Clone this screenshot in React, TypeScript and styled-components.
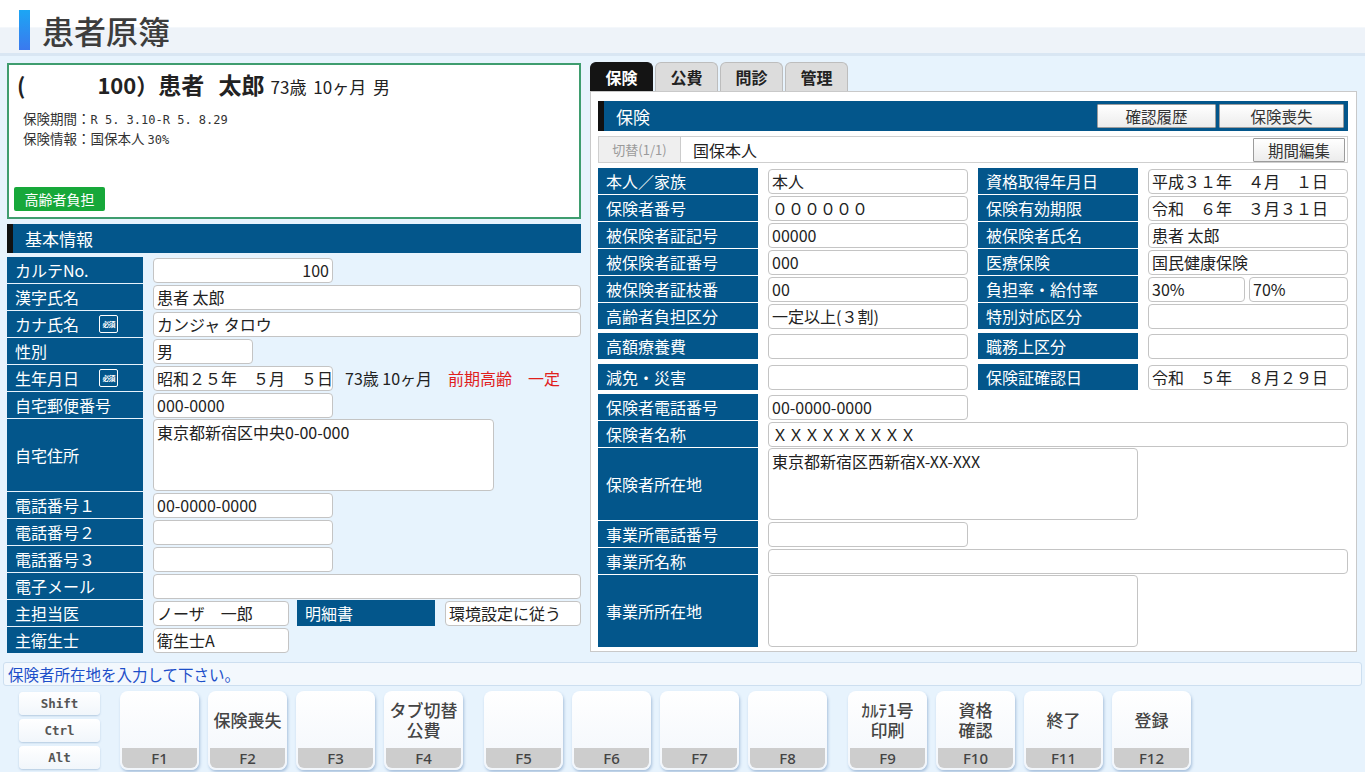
import styled, { createGlobalStyle } from "styled-components";

const GlobalStyle = createGlobalStyle`
    html, body {
        margin: 0;
        padding: 0;
    }

    body {
        background: #e7f3fd;
        font-family: "Noto Sans CJK JP", "Noto Sans", sans-serif;
        color: #222;
    }

    * {
        box-sizing: border-box;
    }
`

const Page = styled.div`
    width: 1365px;
    height: 772px;
    overflow: hidden;
`

const Header = styled.header`
    display: flex;
    align-items: center;

    height: 56px;
    padding: 7px 0 0 19px;

    background: linear-gradient(to bottom, #ffffff 0, #ffffff 50%, #eef3f9 53%, #eef3f9 100%);
    border-bottom: 3px solid #d9e6f3;
`

const TitleMark = styled.div`
    width: 11px;
    height: 40px;
    background: linear-gradient(to bottom, #1ca6f4, #3b79ee);
`

const Title = styled.h1`
    margin: 0 0 0 12px;
    font-size: 32px;
    font-weight: 500;
    line-height: 1;
    color: #3d3d3d;
`

const Main = styled.main`
    display: flex;
    gap: 9px;

    height: 597px;
    padding: 6px 0 0 7px;
`

const LeftColumn = styled.div`
    width: 574px;
`

const PatientCard = styled.div`
    display: flex;
    flex-direction: column;

    height: 156px;
    margin-top: 1px;
    padding: 6px 5px 6px 5px;

    background: #fff;
    border: 2px solid #3f9d6f;
`

const NameLine = styled.div`
    display: flex;
    align-items: baseline;

    margin-left: 3px;
    line-height: 26px;
    font-size: 22px;
    font-weight: 700;
    white-space: nowrap;
`

const CardNo = styled.span`
    display: inline-block;
    width: 111px;
    text-align: right;
`

const PatientName = styled.span`
    font-size: 23px;
    word-spacing: 9px;
`

const PatientAge = styled.span`
    margin-left: 6px;
    font-size: 17px;
    font-weight: 400;
    word-spacing: 3px;
`

const InfoLines = styled.div`
    margin: 9px 0 0 9px;
    font-size: 13.5px;
    line-height: 18px;
    color: #333;
`

const Mono = styled.span`
    font-family: "DejaVu Sans Mono", "Noto Sans CJK JP", monospace;
    font-size: 12px;
`

const ElderBadge = styled.div`
    display: flex;
    align-items: center;
    justify-content: center;
    align-self: flex-start;

    width: 91px;
    height: 24px;
    margin-top: auto;

    background: #17a83a;
    border-radius: 2px;
    color: #fff;
    font-size: 14px;
`

const SectionHeader = styled.div`
    display: flex;
    align-items: center;

    height: 29px;
    margin-top: 5px;
    padding-left: 12px;

    background: #03568b;
    border-left: 6px solid #111;
    color: #fff;
    font-size: 17px;
`

const Rows = styled.div<{ $mt?: number }>`
    display: flex;
    flex-direction: column;
    gap: 1px;
    margin-top: ${(p) => p.$mt ?? 4}px;
`

const Row = styled.div<{ $h?: number; $mt?: number }>`
    display: flex;
    align-items: center;
    gap: 10px;

    height: ${(p) => p.$h ?? 26}px;
    margin-top: ${(p) => p.$mt ?? 0}px;
    white-space: nowrap;
`

const Label = styled.div<{ $w: number; $ml?: number }>`
    display: flex;
    align-items: center;
    align-self: stretch;

    flex: 0 0 ${(p) => p.$w}px;
    margin-left: ${(p) => p.$ml ?? 0}px;
    padding-left: 8px;

    background: #03568b;
    color: #fff;
    font-size: 16px;
    white-space: nowrap;
`

const Required = styled.span`
    display: flex;
    align-items: center;
    justify-content: center;

    width: 19px;
    height: 18px;
    margin: 0 25px 0 auto;

    border: 1px solid #fff;
    border-radius: 2px;
    font-size: 7px;
    font-weight: 700;
    letter-spacing: -1px;
`

const Field = styled.div<{ $w: number; $multi?: boolean; $right?: boolean }>`
    flex: 0 0 ${(p) => p.$w}px;
    height: ${(p) => (p.$multi ? "100%" : "25px")};
    padding: ${(p) => (p.$multi ? "1px 3px" : "0 3px")};

    background: #fff;
    border: 1px solid #c4c4c4;
    border-radius: 4px;

    font-size: 16px;
    line-height: 23px;
    text-align: ${(p) => (p.$right ? "right" : "left")};
    color: #222;
    white-space: nowrap;
    overflow: hidden;
`

const FieldPair = styled.div`
    display: flex;
    gap: 4px;
    flex: 0 0 200px;
`

const AgeNote = styled.span`
    flex-shrink: 0;
    margin-left: 2px;
    font-size: 16px;
`

const AlertNote = styled.span`
    flex-shrink: 0;
    margin-left: 6px;
    font-size: 16px;
    color: #e0201c;
`

const RightColumn = styled.div`
    width: 767px;
`

const Tabs = styled.div`
    display: flex;
    gap: 2px;
    height: 29px;
`

const Tab = styled.div<{ $active?: boolean }>`
    display: flex;
    align-items: center;
    justify-content: center;

    width: 63px;

    background: ${(p) => (p.$active ? "#141414" : "#dcdcdc")};
    border: 1px solid ${(p) => (p.$active ? "#141414" : "#bdbdbd")};
    border-bottom: none;
    border-radius: 6px 6px 0 0;
    color: ${(p) => (p.$active ? "#fff" : "#222")};
    font-size: 16px;
    font-weight: 700;
`

const PanelBody = styled.div`
    height: 561px;
    padding: 9px 8px 0 7px;

    background: #fff;
    border: 1px solid #c9c9c9;
`

const PanelHeader = styled.div`
    display: flex;
    align-items: center;
    gap: 3px;

    height: 30px;
    padding: 0 4px 0 12px;

    background: #03568b;
    border-left: 6px solid #111;
    color: #fff;
    font-size: 17px;
`

const PanelTitle = styled.span`
    margin-right: auto;
`

const GreyButton = styled.div<{ $w: number }>`
    display: flex;
    align-items: center;
    justify-content: center;

    width: ${(p) => p.$w}px;
    height: 24px;

    background: linear-gradient(to bottom, #ffffff, #ececec);
    border: 1px solid #9c9c9c;
    border-radius: 1px;
    color: #333;
    font-size: 15.5px;
`

const SwitchRow = styled.div`
    display: flex;
    align-items: center;

    height: 27px;
    margin-top: 5px;
    padding-right: 2px;

    border: 1px solid #cfcfcf;
`

const SwitchButton = styled.div`
    display: flex;
    align-items: center;
    justify-content: center;

    width: 82px;
    height: 100%;

    background: #efefef;
    border-right: 1px solid #cccccc;
    color: #9a9a9a;
    font-size: 13px;
`

const PlanName = styled.span`
    margin: 0 auto 0 12px;
    font-size: 16px;
`

const StatusBar = styled.div`
    height: 24px;
    margin: 9px 3px 0 3px;
    padding-left: 4px;

    background: #f3f8fd;
    border: 1px solid #cddff0;
    border-radius: 3px;
    color: #1d4fc9;
    font-size: 15.5px;
    line-height: 22px;
`

const Footer = styled.footer`
    display: flex;
    gap: 20px;
    padding: 5px 0 0 19px;
`

const ModColumn = styled.div`
    display: flex;
    flex-direction: column;
    gap: 4px;
    padding-top: 1px;
`

const ModKey = styled.div`
    display: flex;
    align-items: center;
    justify-content: center;

    width: 81px;
    height: 23px;

    background: linear-gradient(to bottom, #ffffff, #f1f6fb);
    border-radius: 4px;
    box-shadow: 0 1px 2px rgba(80, 120, 170, 0.35);
    color: #555;
    font-family: "DejaVu Sans Mono", monospace;
    font-size: 12.5px;
    font-weight: 700;
`

const KeyGroups = styled.div`
    display: flex;
    gap: 21px;
`

const KeyGroup = styled.div`
    display: flex;
    gap: 9px;
`

const FKey = styled.div`
    display: flex;
    flex-direction: column;

    width: 79px;
    height: 79px;
    padding: 0 2px 2px;

    background: linear-gradient(to bottom, #ffffff, #f2f6fb);
    border-radius: 8px;
    box-shadow: 1px 2px 3px rgba(90, 130, 180, 0.45);
`

const KeyFace = styled.div`
    display: flex;
    align-items: center;
    justify-content: center;
    flex: 1;

    font-size: 17px;
    font-weight: 500;
    line-height: 20px;
    text-align: center;
    color: #444;
    white-space: pre-line;
`

const KeyNo = styled.div`
    height: 20px;

    background: #cdcdcd;
    border-radius: 0 0 6px 6px;
    color: #444;
    font-family: "Noto Sans", sans-serif;
    font-size: 15px;
    font-weight: 500;
    line-height: 20px;
    text-align: center;
`

const keyGroups = [
    [["F1", ""], ["F2", "保険喪失"], ["F3", ""], ["F4", "タブ切替\n公費"]],
    [["F5", ""], ["F6", ""], ["F7", ""], ["F8", ""]],
    [["F9", "ｶﾙﾃ1号\n印刷"], ["F10", "資格\n確認"], ["F11", "終了"], ["F12", "登録"]],
];

function BasicInfo() {
    return (
        <LeftColumn>
            <PatientCard>
                <NameLine>
                    <span>(</span>
                    <CardNo>100</CardNo>
                    <span>）</span>
                    <PatientName>患者 太郎</PatientName>
                    <PatientAge>73歳 10ヶ月 男</PatientAge>
                </NameLine>
                <InfoLines>
                    <div>保険期間：<Mono>R 5. 3.10-R 5. 8.29</Mono></div>
                    <div>保険情報：国保本人 <Mono>30%</Mono></div>
                </InfoLines>
                <ElderBadge>高齢者負担</ElderBadge>
            </PatientCard>

            <SectionHeader>基本情報</SectionHeader>

            <Rows>
                <Row>
                    <Label $w={136}>カルテNo.</Label>
                    <Field $w={180} $right>100</Field>
                </Row>
                <Row>
                    <Label $w={136}>漢字氏名</Label>
                    <Field $w={428}>患者 太郎</Field>
                </Row>
                <Row>
                    <Label $w={136}>カナ氏名<Required>必須</Required></Label>
                    <Field $w={428}>カンジャ タロウ</Field>
                </Row>
                <Row>
                    <Label $w={136}>性別</Label>
                    <Field $w={100}>男</Field>
                </Row>
                <Row>
                    <Label $w={136}>生年月日<Required>必須</Required></Label>
                    <Field $w={180}>昭和２５年　５月　５日</Field>
                    <AgeNote>73歳 10ヶ月</AgeNote>
                    <AlertNote>前期高齢　一定</AlertNote>
                </Row>
                <Row>
                    <Label $w={136}>自宅郵便番号</Label>
                    <Field $w={180}>000-0000</Field>
                </Row>
                <Row $h={72}>
                    <Label $w={136}>自宅住所</Label>
                    <Field $w={341} $multi>東京都新宿区中央0-00-000</Field>
                </Row>
                <Row>
                    <Label $w={136}>電話番号１</Label>
                    <Field $w={180}>00-0000-0000</Field>
                </Row>
                <Row>
                    <Label $w={136}>電話番号２</Label>
                    <Field $w={180}></Field>
                </Row>
                <Row>
                    <Label $w={136}>電話番号３</Label>
                    <Field $w={180}></Field>
                </Row>
                <Row>
                    <Label $w={136}>電子メール</Label>
                    <Field $w={428}></Field>
                </Row>
                <Row>
                    <Label $w={136}>主担当医</Label>
                    <Field $w={136}>ノーザ　一郎</Field>
                    <Label $w={138} $ml={-2}>明細書</Label>
                    <Field $w={136}>環境設定に従う</Field>
                </Row>
                <Row>
                    <Label $w={136}>主衛生士</Label>
                    <Field $w={136}>衛生士A</Field>
                </Row>
            </Rows>
        </LeftColumn>
    )
}

function InsurancePanel() {
    return (
        <RightColumn>
            <Tabs>
                <Tab $active>保険</Tab>
                <Tab>公費</Tab>
                <Tab>問診</Tab>
                <Tab>管理</Tab>
            </Tabs>
            <PanelBody>
                <PanelHeader>
                    <PanelTitle>保険</PanelTitle>
                    <GreyButton $w={119}>確認履歴</GreyButton>
                    <GreyButton $w={125}>保険喪失</GreyButton>
                </PanelHeader>

                <SwitchRow>
                    <SwitchButton>切替(1/1)</SwitchButton>
                    <PlanName>国保本人</PlanName>
                    <GreyButton $w={92}>期間編集</GreyButton>
                </SwitchRow>

                <Rows $mt={5}>
                    <Row>
                        <Label $w={160}>本人／家族</Label>
                        <Field $w={200}>本人</Field>
                        <Label $w={160}>資格取得年月日</Label>
                        <Field $w={200}>平成３１年　４月　１日</Field>
                    </Row>
                    <Row>
                        <Label $w={160}>保険者番号</Label>
                        <Field $w={200}>００００００</Field>
                        <Label $w={160}>保険有効期限</Label>
                        <Field $w={200}>令和　６年　３月３１日</Field>
                    </Row>
                    <Row>
                        <Label $w={160}>被保険者証記号</Label>
                        <Field $w={200}>00000</Field>
                        <Label $w={160}>被保険者氏名</Label>
                        <Field $w={200}>患者 太郎</Field>
                    </Row>
                    <Row>
                        <Label $w={160}>被保険者証番号</Label>
                        <Field $w={200}>000</Field>
                        <Label $w={160}>医療保険</Label>
                        <Field $w={200}>国民健康保険</Field>
                    </Row>
                    <Row>
                        <Label $w={160}>被保険者証枝番</Label>
                        <Field $w={200}>00</Field>
                        <Label $w={160}>負担率・給付率</Label>
                        <FieldPair>
                            <Field $w={97}>30%</Field>
                            <Field $w={99}>70%</Field>
                        </FieldPair>
                    </Row>
                    <Row>
                        <Label $w={160}>高齢者負担区分</Label>
                        <Field $w={200}>一定以上(３割)</Field>
                        <Label $w={160}>特別対応区分</Label>
                        <Field $w={200}></Field>
                    </Row>
                    <Row $mt={3}>
                        <Label $w={160}>高額療養費</Label>
                        <Field $w={200}></Field>
                        <Label $w={160}>職務上区分</Label>
                        <Field $w={200}></Field>
                    </Row>
                    <Row $mt={4}>
                        <Label $w={160}>減免・災害</Label>
                        <Field $w={200}></Field>
                        <Label $w={160}>保険証確認日</Label>
                        <Field $w={200}>令和　５年　８月２９日</Field>
                    </Row>
                    <Row $mt={3}>
                        <Label $w={160}>保険者電話番号</Label>
                        <Field $w={200}>00-0000-0000</Field>
                    </Row>
                    <Row>
                        <Label $w={160}>保険者名称</Label>
                        <Field $w={580}>ＸＸＸＸＸＸＸＸＸ</Field>
                    </Row>
                    <Row $h={72}>
                        <Label $w={160}>保険者所在地</Label>
                        <Field $w={370} $multi>東京都新宿区西新宿X-XX-XXX</Field>
                    </Row>
                    <Row>
                        <Label $w={160}>事業所電話番号</Label>
                        <Field $w={200}></Field>
                    </Row>
                    <Row>
                        <Label $w={160}>事業所名称</Label>
                        <Field $w={580}></Field>
                    </Row>
                    <Row $h={72}>
                        <Label $w={160}>事業所所在地</Label>
                        <Field $w={370} $multi></Field>
                    </Row>
                </Rows>
            </PanelBody>
        </RightColumn>
    )
}

function FunctionKeys() {
    return (
        <Footer>
            <ModColumn>
                <ModKey>Shift</ModKey>
                <ModKey>Ctrl</ModKey>
                <ModKey>Alt</ModKey>
            </ModColumn>
            <KeyGroups>
                {keyGroups.map((group, i) => (
                    <KeyGroup key={i}>
                        {group.map(([no, text]) => (
                            <FKey key={no}>
                                <KeyFace>{text}</KeyFace>
                                <KeyNo>{no}</KeyNo>
                            </FKey>
                        ))}
                    </KeyGroup>
                ))}
            </KeyGroups>
        </Footer>
    )
}

export default function App() {
    return (
        <Page>
            <GlobalStyle />
            <Header>
                <TitleMark />
                <Title>患者原簿</Title>
            </Header>
            <Main>
                <BasicInfo />
                <InsurancePanel />
            </Main>
            <StatusBar>保険者所在地を入力して下さい。</StatusBar>
            <FunctionKeys />
        </Page>
    )
}
